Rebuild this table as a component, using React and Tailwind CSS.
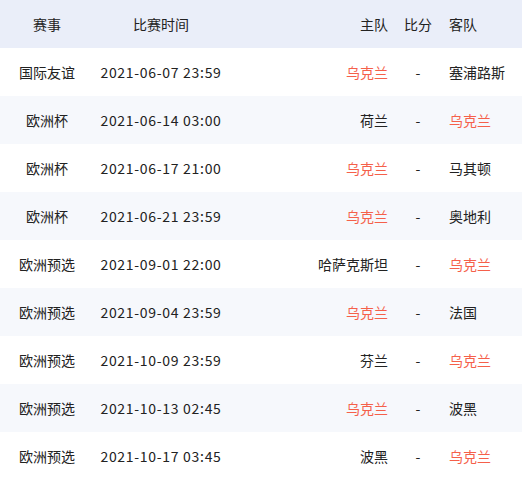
const matches = [
  { type: '国际友谊', time: '2021-06-07 23:59', home: '乌克兰', away: '塞浦路斯' },
  { type: '欧洲杯', time: '2021-06-14 03:00', home: '荷兰', away: '乌克兰' },
  { type: '欧洲杯', time: '2021-06-17 21:00', home: '乌克兰', away: '马其顿' },
  { type: '欧洲杯', time: '2021-06-21 23:59', home: '乌克兰', away: '奥地利' },
  { type: '欧洲预选', time: '2021-09-01 22:00', home: '哈萨克斯坦', away: '乌克兰' },
  { type: '欧洲预选', time: '2021-09-04 23:59', home: '乌克兰', away: '法国' },
  { type: '欧洲预选', time: '2021-10-09 23:59', home: '芬兰', away: '乌克兰' },
  { type: '欧洲预选', time: '2021-10-13 02:45', home: '乌克兰', away: '波黑' },
  { type: '欧洲预选', time: '2021-10-17 03:45', home: '波黑', away: '乌克兰' },
];

const team = (name) => (name === '乌克兰' ? 'text-[#f5604a]' : 'text-[#222]');

export default function App() {
  return (
    <div
      className="w-[522px] h-[478px] overflow-hidden bg-white text-[14px] text-[#222]"
      style={{ fontFamily: '"Noto Sans CJK SC", "Noto Sans", sans-serif' }}
    >
      {/* header */}
      <div className="grid grid-cols-[94px_134px_170px_40px_84px] h-[48px] items-center bg-[#eaeef9]">
        <div className="text-center">赛事</div>
        <div className="text-center">比赛时间</div>
        <div className="text-right pr-[10px]">主队</div>
        <div className="text-center">比分</div>
        <div className="pl-[11px]">客队</div>
      </div>

      {matches.map((m, i) => (
        <div
          key={i}
          className={
            'grid grid-cols-[94px_134px_170px_40px_84px] h-[48px] items-center ' +
            (i % 2 === 1 ? 'bg-[#f6f8fc]' : 'bg-white')
          }
        >
          <div className="text-center">{m.type}</div>
          <div className="text-center tracking-[0.7px]">{m.time}</div>
          <div className={'text-right pr-[10px] ' + team(m.home)}>{m.home}</div>
          <div className="text-center">-</div>
          <div className={'pl-[11px] ' + team(m.away)}>{m.away}</div>
        </div>
      ))}
    </div>
  );
}
